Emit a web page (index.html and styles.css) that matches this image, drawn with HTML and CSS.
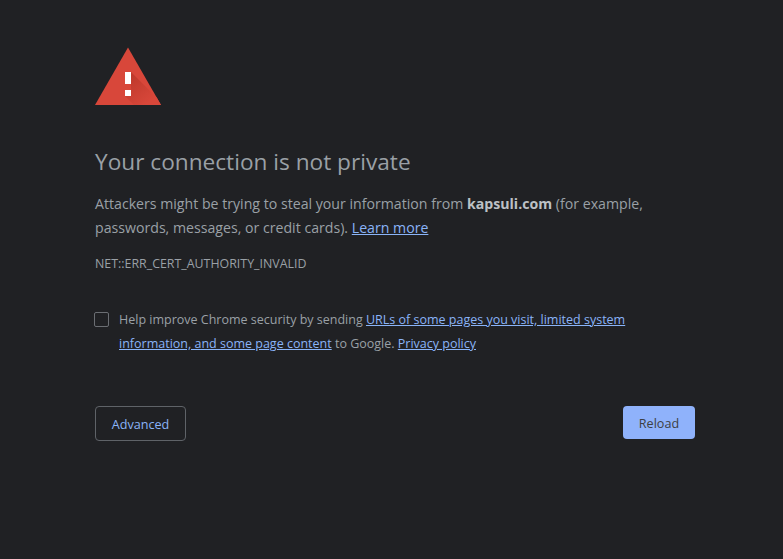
FILE: index.html
```html
<!DOCTYPE html>
<html lang="en">
<head>
    <meta charset="UTF-8">
    <meta name="viewport" content="width=device-width, initial-scale=1.0">
    <title>Privacy error</title>
    <link rel="stylesheet" href="styles.css">
</head>
<body>
    <div class="interstitial">
        <svg class="warning-icon" width="66" height="58" viewBox="0 0 66 58">
            <defs>
                <linearGradient id="iconShadow" x1="0.2" y1="0.1" x2="0.8" y2="0.8">
                    <stop offset="0" stop-color="#bf392c"/>
                    <stop offset="1" stop-color="#d8473a"/>
                </linearGradient>
            </defs>
            <path d="M33 0.5 L66 58 L0 58 Z" fill="#d8473a"/>
            <path d="M36 25 L62 51 L66 58 L39 58 L30 49 L36 43 Z" fill="url(#iconShadow)"/>
            <rect x="30" y="25" width="6" height="12" fill="#fff"/>
            <rect x="30" y="43" width="6" height="6" fill="#fff"/>
        </svg>
        <h1 class="heading">Your connection is not private</h1>
        <p class="message">Attackers might be trying to steal your information from <strong>kapsuli.com</strong> (for example, passwords, messages, or credit cards). <a href="#">Learn more</a></p>
        <p class="error-code">NET::ERR_CERT_AUTHORITY_INVALID</p>
        <div class="opt-in">
            <span class="checkbox"></span>
            <p>Help improve Chrome security by sending <a href="#">URLs of some pages you visit, limited system information, and some page content</a> to Google. <a href="#">Privacy policy</a></p>
        </div>
        <div class="buttons">
            <button class="btn-advanced">Advanced</button>
            <button class="btn-reload">Reload</button>
        </div>
    </div>
</body>
</html>
```

FILE: styles.css
```css
body {
    font-family: 'Open Sans', 'Liberation Sans', sans-serif;
    background-color: #202124;
    color: #9aa0a6;
    margin: 0;
    padding: 0;
}
a {
    color: #8ab4f8;
}
.interstitial {
    width: 600px;
    margin-left: 95px;
    padding-top: 47px;
}
.warning-icon {
    display: block;
}
.heading {
    margin: 41px 0 0;
    font-size: 22.65px;
    font-weight: 400;
    line-height: 32px;
    color: #9aa0a6;
}
.message {
    margin: 14px 0 0;
    font-size: 14.15px;
    line-height: 24px;
}
.message strong {
    font-weight: 700;
    color: #bdc1c6;
}
.error-code {
    margin: 12px 0 0;
    font-size: 12.4px;
    line-height: 24px;
}
.opt-in {
    display: flex;
    margin-top: 32px;
    font-size: 12.5px;
    line-height: 24px;
}
.opt-in p {
    margin: 0;
    width: 520px;
}
.checkbox {
    flex: none;
    width: 13px;
    height: 13px;
    margin: 4px 10px 0 -1px;
    border: 1px solid #6b6e73;
    border-radius: 2px;
}
.buttons {
    display: flex;
    justify-content: space-between;
    align-items: flex-start;
    margin-top: 50px;
}
.buttons button {
    font-family: inherit;
    font-size: 12.6px;
    border-radius: 4px;
    padding: 2px 0 0;
}
.btn-advanced {
    width: 91px;
    height: 35px;
    background: transparent;
    border: 1px solid #5f6368;
    color: #8ab4f8;
}
.btn-reload {
    width: 72px;
    height: 33px;
    background: #8fb2fb;
    border: none;
    color: #3c4043;
}
```
